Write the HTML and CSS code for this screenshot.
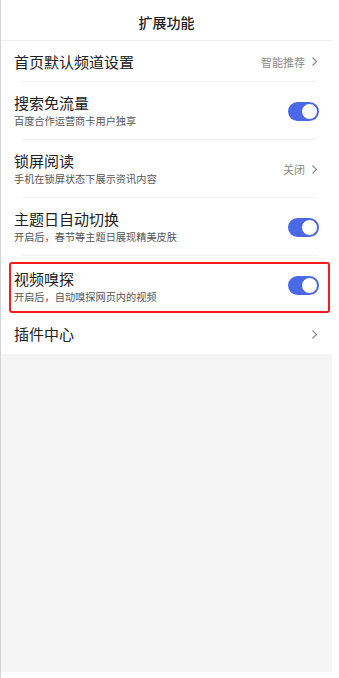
FILE: index.html
```html
<!DOCTYPE html>
<html lang="zh">
<head>
<meta charset="utf-8">
<link rel="stylesheet" href="styles.css">
</head>
<body>
<div class="frame">
  <div class="panel">
    <div class="header">扩展功能</div>
    <div class="list">
      <div class="row row-single">
        <div class="title">首页默认频道设置</div>
        <div class="right"><span class="value">智能推荐</span><svg class="chev" width="7" height="11" viewBox="0 0 7 11"><polyline points="1.5,1.5 5.5,5.5 1.5,9.5" fill="none" stroke="#8a8a8a" stroke-width="1.2"/></svg></div>
      </div>
      <div class="row row-double">
        <div class="texts"><div class="title">搜索免流量</div><div class="sub">百度合作运营商卡用户独享</div></div>
        <div class="toggle"><span class="knob"></span></div>
      </div>
      <div class="row row-double">
        <div class="texts"><div class="title">锁屏阅读</div><div class="sub">手机在锁屏状态下展示资讯内容</div></div>
        <div class="right"><span class="value">关闭</span><svg class="chev" width="7" height="11" viewBox="0 0 7 11"><polyline points="1.5,1.5 5.5,5.5 1.5,9.5" fill="none" stroke="#8a8a8a" stroke-width="1.2"/></svg></div>
      </div>
      <div class="row row-double">
        <div class="texts"><div class="title">主题日自动切换</div><div class="sub">开启后，春节等主题日展现精美皮肤</div></div>
        <div class="toggle"><span class="knob"></span></div>
      </div>
      <div class="row row-double row-marked">
        <div class="texts"><div class="title">视频嗅探</div><div class="sub">开启后，自动嗅探网页内的视频</div></div>
        <div class="toggle"><span class="knob"></span></div>
        <div class="mark"></div>
      </div>
      <div class="row row-last">
        <div class="title">插件中心</div>
        <div class="right"><svg class="chev" width="7" height="11" viewBox="0 0 7 11"><polyline points="1.5,1.5 5.5,5.5 1.5,9.5" fill="none" stroke="#8a8a8a" stroke-width="1.2"/></svg></div>
      </div>
    </div>
  </div>
</div>
</body>
</html>
```
FILE: styles.css
```css
html, body {
  margin: 0;
  padding: 0;
  background: #ffffff;
}
body {
  font-family: "Noto Sans CJK SC", "Noto Sans", sans-serif;
  color: #222222;
}
.frame {
  height: 678px;
  border-left: 1px solid #d2d2d2;
  box-sizing: border-box;
}
.panel {
  width: 331px;
  height: 672px;
  background: #f5f5f5;
}
.header {
  height: 41px;
  border-bottom: 1px solid #efefef;
  background: #fff;
  display: flex;
  align-items: center;
  justify-content: center;
  font-size: 14px;
  font-weight: 500;
  color: #1e1e1e;
  padding-top: 3px;
  box-sizing: border-box;
}
.list {
  background: #fff;
}
.row {
  position: relative;
  display: flex;
  align-items: center;
  justify-content: space-between;
  padding: 0 13px 0 13px;
  box-sizing: border-box;
}
.row::after {
  content: "";
  position: absolute;
  left: 20px;
  right: 15px;
  bottom: 0;
  height: 1px;
  background: #f1f1f1;
}
.row-single { height: 41px; }
.row-double { height: 58px; }
.row-marked { height: 58px; }
.row-marked::after { display: none; }
.row-last { height: 40px; }
.row-last::after { display: none; }
.title {
  font-size: 15px;
  line-height: 18px;
  color: #202020;
}
.sub {
  font-size: 10.2px;
  line-height: 14px;
  color: #555555;
  margin-top: 2px;
}
.row-marked .texts { padding-top: 3px; }
.right {
  display: flex;
  align-items: center;
  gap: 6px;
  padding-right: 1px;
}
.value {
  font-size: 11px;
  color: #8a8a8a;
}
.chev { display: block; }
.toggle {
  width: 31px;
  height: 19px;
  border-radius: 10px;
  background: #4b69e6;
  position: relative;
}
.knob {
  position: absolute;
  right: 1px;
  top: 1px;
  width: 15px;
  height: 15px;
  border-radius: 50%;
  background: #fff;
  border: 1px solid #3f5fdc;
}
.mark {
  position: absolute;
  left: 8px;
  top: 6px;
  width: 321px;
  height: 51px;
  border: 2px solid #f41c1c;
  border-radius: 3px;
  box-sizing: border-box;
}
```
